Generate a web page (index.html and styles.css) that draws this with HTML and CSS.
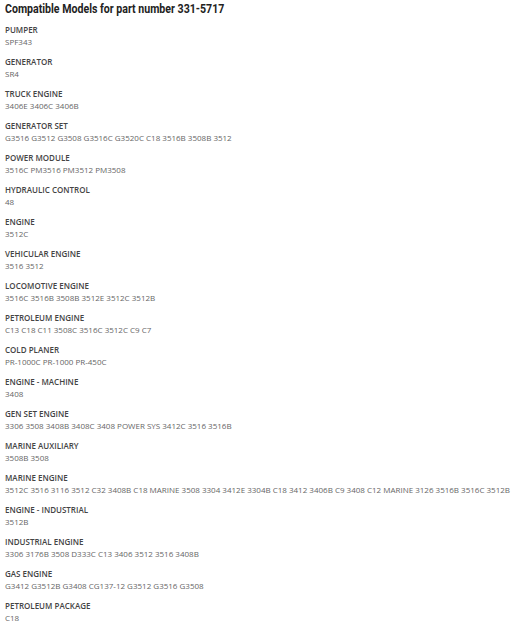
FILE: index.html
```html
<!DOCTYPE html>
<html>
<head>
  <title>Compatible Models</title>
  <link rel="stylesheet" href="styles.css">
</head>
<body>
  <div class="models">
    <h2 class="title">Compatible Models for part number 331-5717</h2>

    <div class="model">
      <div class="name">PUMPER</div>
      <div class="list">SPF343</div>
    </div>
    <div class="model">
      <div class="name">GENERATOR</div>
      <div class="list">SR4</div>
    </div>
    <div class="model">
      <div class="name">TRUCK ENGINE</div>
      <div class="list">3406E 3406C 3406B</div>
    </div>
    <div class="model">
      <div class="name">GENERATOR SET</div>
      <div class="list">G3516 G3512 G3508 G3516C G3520C C18 3516B 3508B 3512</div>
    </div>
    <div class="model">
      <div class="name">POWER MODULE</div>
      <div class="list">3516C PM3516 PM3512 PM3508</div>
    </div>
    <div class="model">
      <div class="name">HYDRAULIC CONTROL</div>
      <div class="list">48</div>
    </div>
    <div class="model">
      <div class="name">ENGINE</div>
      <div class="list">3512C</div>
    </div>
    <div class="model">
      <div class="name">VEHICULAR ENGINE</div>
      <div class="list">3516 3512</div>
    </div>
    <div class="model">
      <div class="name">LOCOMOTIVE ENGINE</div>
      <div class="list">3516C 3516B 3508B 3512E 3512C 3512B</div>
    </div>
    <div class="model">
      <div class="name">PETROLEUM ENGINE</div>
      <div class="list">C13 C18 C11 3508C 3516C 3512C C9 C7</div>
    </div>
    <div class="model">
      <div class="name">COLD PLANER</div>
      <div class="list">PR-1000C PR-1000 PR-450C</div>
    </div>
    <div class="model">
      <div class="name">ENGINE - MACHINE</div>
      <div class="list">3408</div>
    </div>
    <div class="model">
      <div class="name">GEN SET ENGINE</div>
      <div class="list">3306 3508 3408B 3408C 3408 POWER SYS 3412C 3516 3516B</div>
    </div>
    <div class="model">
      <div class="name">MARINE AUXILIARY</div>
      <div class="list">3508B 3508</div>
    </div>
    <div class="model">
      <div class="name">MARINE ENGINE</div>
      <div class="list">3512C 3516 3116 3512 C32 3408B C18 MARINE 3508 3304 3412E 3304B C18 3412 3406B C9 3408 C12 MARINE 3126 3516B 3516C 3512B</div>
    </div>
    <div class="model">
      <div class="name">ENGINE - INDUSTRIAL</div>
      <div class="list">3512B</div>
    </div>
    <div class="model">
      <div class="name">INDUSTRIAL ENGINE</div>
      <div class="list">3306 3176B 3508 D333C C13 3406 3512 3516 3408B</div>
    </div>
    <div class="model">
      <div class="name">GAS ENGINE</div>
      <div class="list">G3412 G3512B G3408 CG137-12 G3512 G3516 G3508</div>
    </div>
    <div class="model">
      <div class="name">PETROLEUM PACKAGE</div>
      <div class="list">C18</div>
    </div>
  </div>
</body>
</html>
```

FILE: styles.css
```css
body {
  margin: 0;
  background: #fff;
  font-family: "Open Sans", "Noto Sans", sans-serif;
  color: #333;
}

.models {
  padding: 1px 5px;
}

.title {
  margin: 0 0 7px 0;
  font-family: Roboto, sans-serif;
  font-size: 13px;
  font-weight: bold;
  line-height: 16px;
  color: #222;
  white-space: nowrap;
  /* condensed look */
  transform: scaleX(0.815);
  transform-origin: left center;
}

.model {
  margin-bottom: 8px;
  white-space: nowrap;
}

.name {
  font-size: 8px;
  font-weight: 600;
  line-height: 12px;
  color: #444;
}

.list {
  font-size: 8px;
  line-height: 12px;
  color: #666;
}
```
